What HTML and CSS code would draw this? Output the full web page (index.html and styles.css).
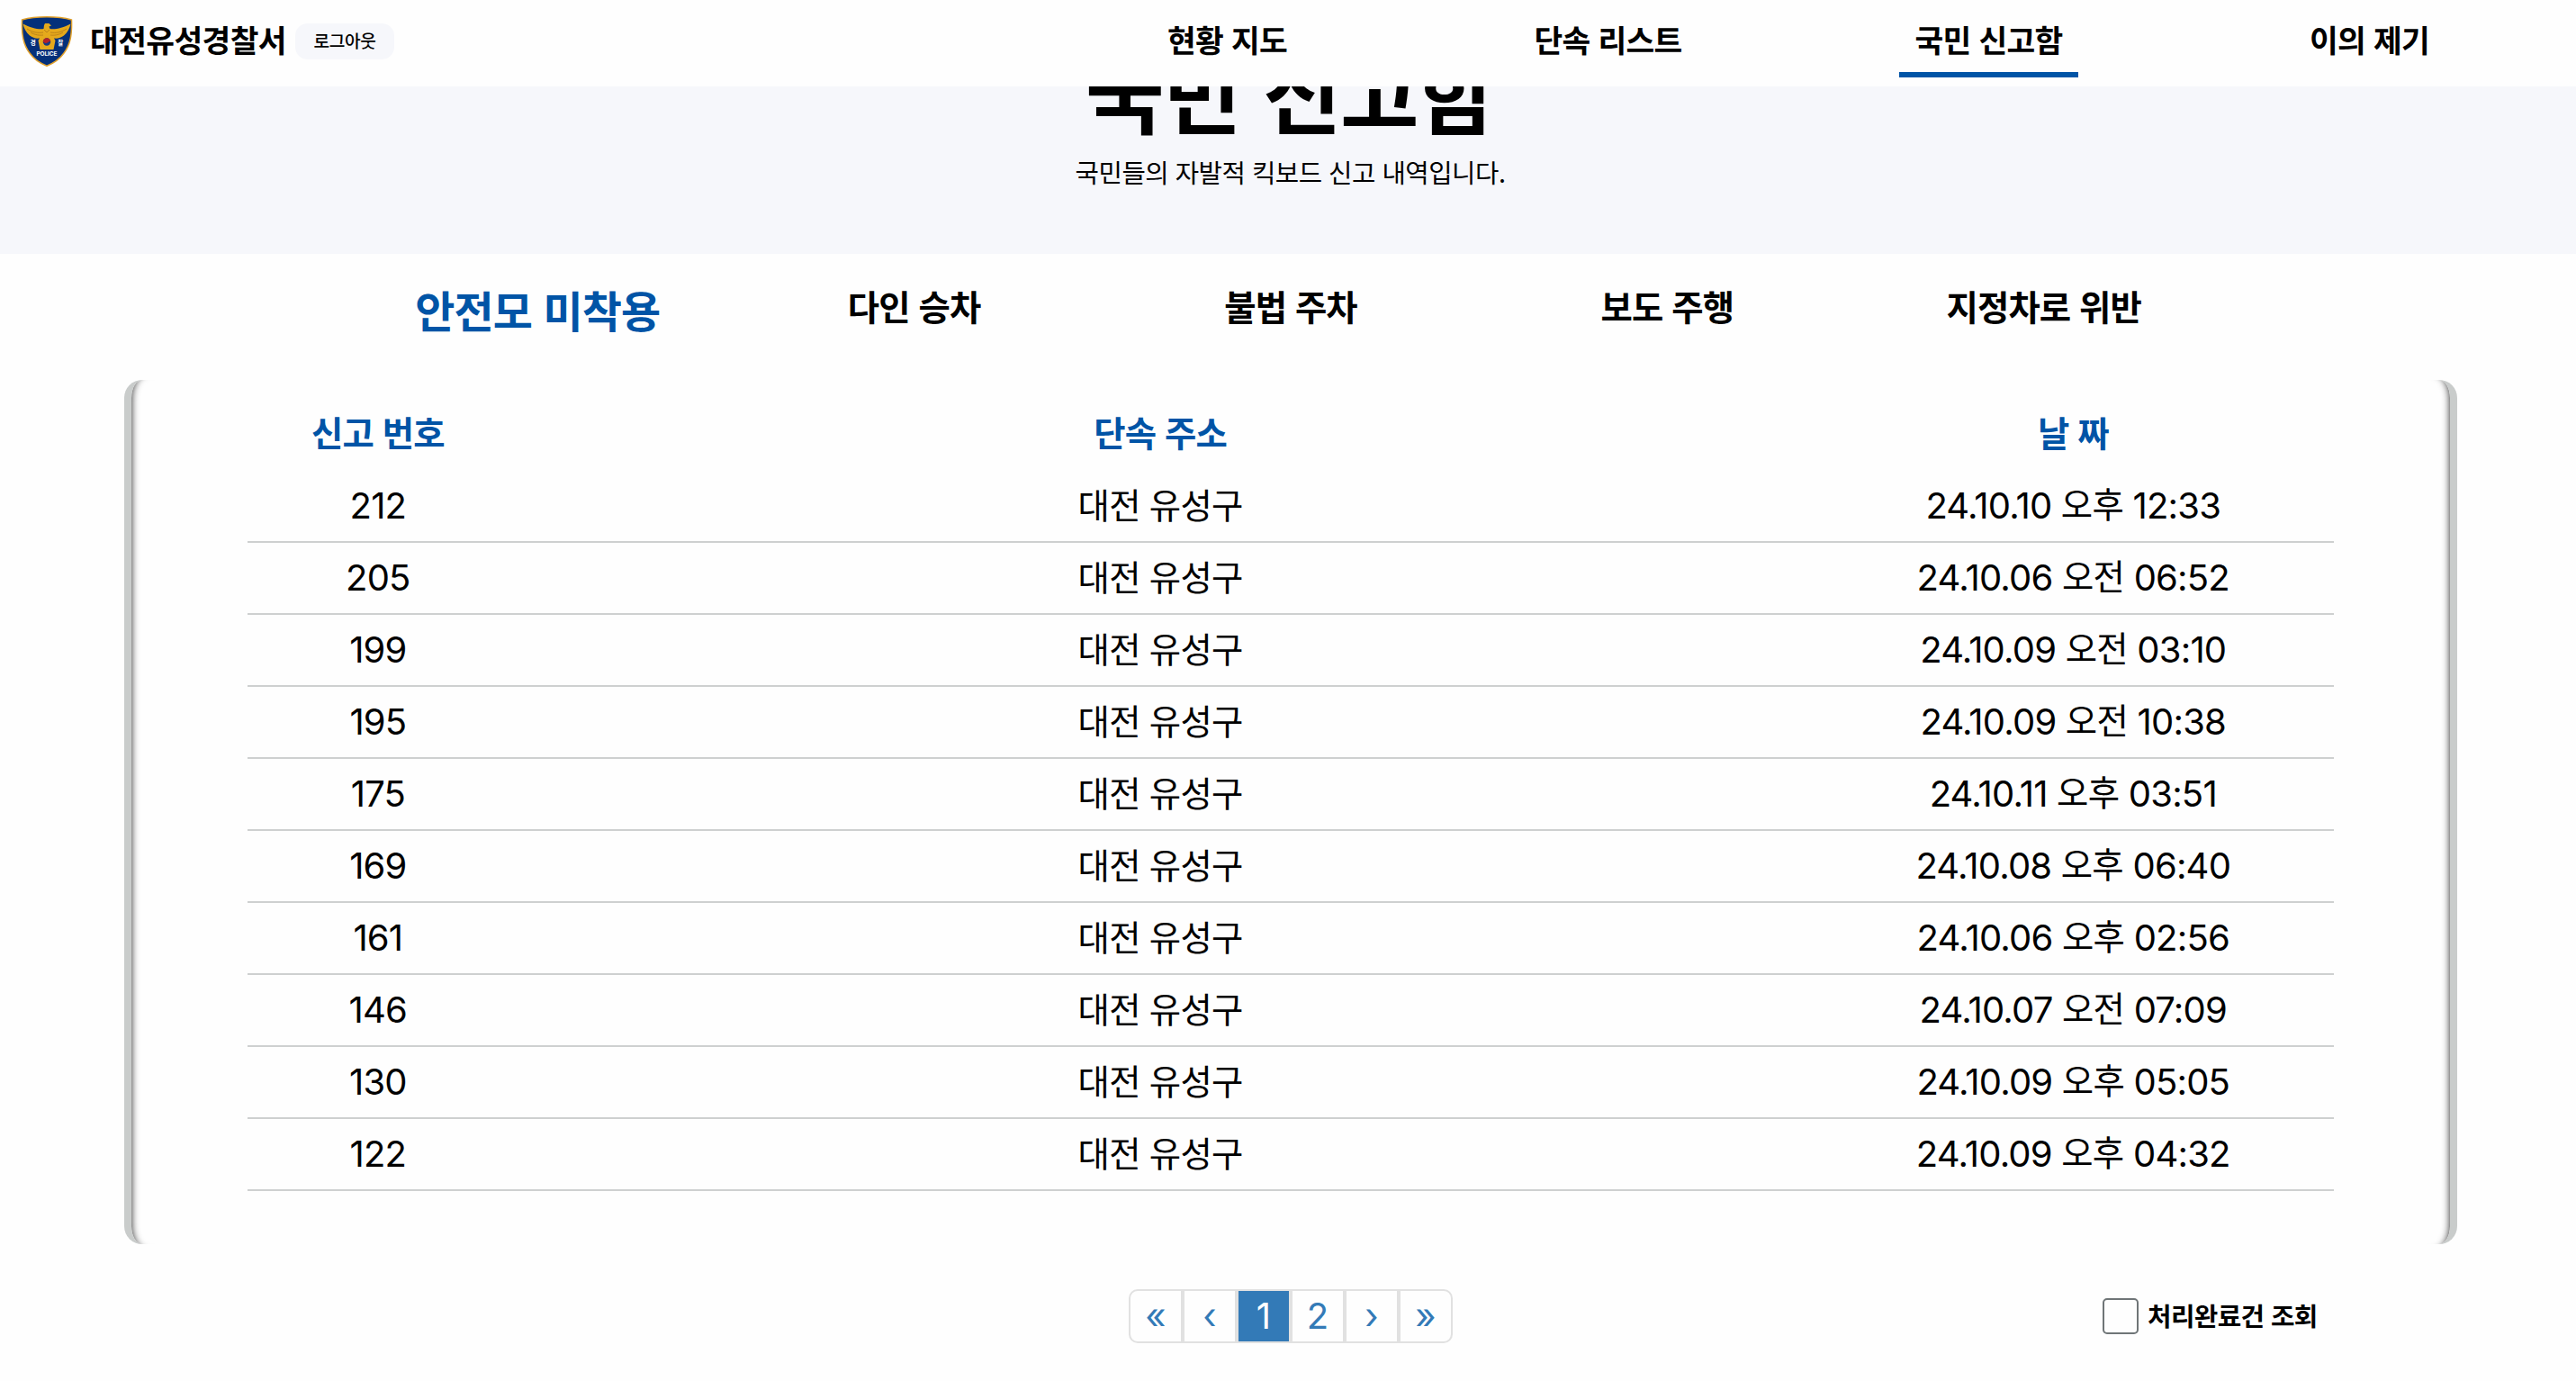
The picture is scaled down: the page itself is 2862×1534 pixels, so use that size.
FILE: index.html
```html
<!DOCTYPE html>
<html lang="ko">
<head>
<meta charset="utf-8">
<title>국민 신고함</title>
<link rel="stylesheet" href="styles.css">
</head>
<body>
<header class="topbar">
  <div class="brand">
    <svg class="logo" viewBox="0 0 58 56" role="img" aria-label="경찰">
      <path d="M1.500 4C10 1.600 19 .8 29 .8S48 1.600 56.500 4C57 20 55.500 31 48 41C43 48 36 52.500 29 55.200C22 52.500 15 48 10 41C2.500 31 1 20 1.500 4Z" fill="#04307a" stroke="#e0a02c" stroke-width="1.500"/>
      <path d="M27 8L31.500 8L34 10.500L31.500 11.500L32.500 14C38 15 47 13 55.500 8.500C54.500 13 52 18 48 21.500C45 24 41 25 37 24.500L38.500 27L36.500 37H21.500L19.500 27L21 24.500C17 25 13 24 10 21.500C6 18 3.500 13 2.500 8.500C11 13 20 15 25.500 14L26 10Z" fill="#e5a91c"/>
      <path d="M7 14C13 18 19 19 25 18M11 18C16 21 21 21.500 25 21M51 14C45 18 39 19 33 18M47 18C42 21 37 21.500 33 21M26 15L29 18L32 15" fill="none" stroke="#a97318" stroke-width=".7"/>
      <circle cx="29" cy="28.500" r="4.200" fill="#173b83"/>
      <path d="M24.800 28.500A4.200 4.200 0 0 1 33.200 28.500C31.500 27 30 30.500 28 30S26 29 24.800 28.500Z" fill="#b32225"/>
      <text x="13.700" y="32" class="logo-hangul">경</text>
      <text x="44.300" y="32" class="logo-hangul">찰</text>
      <text x="29" y="43.500" class="logo-police" textLength="23">POLICE</text>
    </svg>
    <span class="station">대전유성경찰서</span>
    <button class="logout">로그아웃</button>
  </div>
  <nav class="menu">
    <a>현황 지도</a>
    <a>단속 리스트</a>
    <a class="current">국민 신고함</a>
    <a>이의 제기</a>
  </nav>
</header>
<section class="hero">
  <h1>국민 신고함</h1>
  <p>국민들의 자발적 킥보드 신고 내역입니다.</p>
</section>
<nav class="tabs">
  <a class="selected">안전모 미착용</a>
  <a>다인 승차</a>
  <a>불법 주차</a>
  <a>보도 주행</a>
  <a>지정차로 위반</a>
</nav>
<main class="panel">
  <div class="row head"><span>신고 번호</span><span>단속 주소</span><span>날 짜</span></div>
  <div class="row"><span>212</span><span class="ko">대전 유성구</span><span>24.10.10 <b>오후</b> 12:33</span></div>
  <div class="row"><span>205</span><span class="ko">대전 유성구</span><span>24.10.06 <b>오전</b> 06:52</span></div>
  <div class="row"><span>199</span><span class="ko">대전 유성구</span><span>24.10.09 <b>오전</b> 03:10</span></div>
  <div class="row"><span>195</span><span class="ko">대전 유성구</span><span>24.10.09 <b>오전</b> 10:38</span></div>
  <div class="row"><span>175</span><span class="ko">대전 유성구</span><span>24.10.11 <b>오후</b> 03:51</span></div>
  <div class="row"><span>169</span><span class="ko">대전 유성구</span><span>24.10.08 <b>오후</b> 06:40</span></div>
  <div class="row"><span>161</span><span class="ko">대전 유성구</span><span>24.10.06 <b>오후</b> 02:56</span></div>
  <div class="row"><span>146</span><span class="ko">대전 유성구</span><span>24.10.07 <b>오전</b> 07:09</span></div>
  <div class="row"><span>130</span><span class="ko">대전 유성구</span><span>24.10.09 <b>오후</b> 05:05</span></div>
  <div class="row"><span>122</span><span class="ko">대전 유성구</span><span>24.10.09 <b>오후</b> 04:32</span></div>
</main>
<footer class="controls">
  <div class="pages">
    <a>«</a><a>‹</a><a class="active">1</a><a>2</a><a>›</a><a>»</a>
  </div>
  <label class="done"><span class="box"></span><span class="done-text">처리완료건 조회</span></label>
</footer>
</body>
</html>
```
FILE: styles.css
```css
* { box-sizing: border-box; }
body {
  margin: 0;
  height: 1534px;
  overflow: hidden;
  background: #fefefe;
  color: #000;
  font-family: Inter, "Noto Sans CJK KR", sans-serif;
}
.topbar {
  position: relative;
  z-index: 1;
  display: flex;
  justify-content: space-between;
  height: 96px;
  padding-right: 18px;
  background: #fefefe;
}
.brand { display: flex; align-items: center; height: 92px; padding-left: 23px; }
.logo { width: 58px; height: 56px; }
.logo-hangul { font: 700 6.500px "Noto Sans CJK KR", sans-serif; fill: #fff; text-anchor: middle; }
.logo-police { font: 700 6.500px Inter, sans-serif; fill: #fff; text-anchor: middle; }
.station {
  width: 228px;
  margin-left: 19px;
  padding-bottom: 6px;
  font: 600 34.500px/52px "Noto Sans CJK KR", sans-serif;
  letter-spacing: -.6px;
  white-space: nowrap;
}
.logout {
  width: 110px;
  height: 40px;
  padding: 0 0 2px;
  border: 0;
  border-radius: 14px;
  background: #f6f7fb;
  color: #000;
  font: 500 19.200px/38px "Noto Sans CJK KR", sans-serif;
  letter-spacing: -.4px;
}
.menu { display: grid; grid-template-columns: repeat(4, 423px); justify-items: center; }
.menu a {
  height: 86px;
  padding: 17px 18px 0 18px;
  border-bottom: 6px solid transparent;
  font: 600 34.500px/52px "Noto Sans CJK KR", sans-serif;
  letter-spacing: -.75px;
  white-space: nowrap;
}
.menu .current { border-color: #0054a6; }
.hero {
  display: flex;
  flex-direction: column;
  align-items: center;
  height: 186px;
  padding-left: 5px;
  background: #f6f7fb;
}
.hero h1 {
  margin: -55px 0 0;
  font: 700 95.200px/120px "Noto Sans CJK KR", sans-serif;
  letter-spacing: -1.600px;
}
.hero p {
  margin: 10px 0 0;
  font: 400 28.700px/40px "Noto Sans CJK KR", sans-serif;
  letter-spacing: -.5px;
}
.tabs {
  display: grid;
  grid-template-columns: repeat(5, 418.400px);
  justify-content: center;
  height: 140px;
  padding: 27px 0 0 6px;
  text-align: center;
  font: 600 38.400px/60px "Noto Sans CJK KR", sans-serif;
  letter-spacing: -.9px;
}
.selected { color: #0054a6; font-size: 48px; line-height: 68px; }
.panel {
  height: 960px;
  margin: 0 132px 0 138px;
  padding: 19px 129px 0;
  border: solid #c9cccb;
  border-width: 0 8px;
  border-radius: 20px;
  box-shadow: inset 10px 0 9px -10px #222, inset -10px 0 9px -10px #222;
}
.row {
  display: grid;
  grid-template-columns: 12.500% 62.500% 25%;
  height: 80px;
  border-bottom: 2px solid #ced0d0;
  text-align: center;
  font-size: 40px;
  line-height: 78px;
  letter-spacing: -.8px;
}
.row.head {
  height: 82px;
  border: 0;
  color: #0054a6;
  font: 600 38.400px/76px "Noto Sans CJK KR", sans-serif;
  letter-spacing: -.9px;
}
.row .ko, .row b {
  font-family: "Noto Sans CJK KR", sans-serif;
  font-size: 38.400px;
  font-weight: 400;
  letter-spacing: -.7px;
}
.row .ko { line-height: 72px; }
.row b { line-height: 1; vertical-align: 1px; }
.controls {
  display: grid;
  grid-template-columns: 1fr 360px 1fr;
  align-items: center;
  height: 60px;
  margin: 50px 0 0 6px;
}
.pages { grid-column: 2; display: flex; height: 60px; }
.pages a {
  width: 60px;
  border: 2px solid #e1e1e1;
  color: #337ab7;
  font-size: 40px;
  line-height: 56px;
  text-align: center;
}
.pages a:first-child { border-radius: 10px 0 0 10px; }
.pages a:last-child { border-radius: 0 10px 10px 0; }
.pages .active { background: #337ab7; color: #fff; }
.done { display: flex; align-items: center; padding-left: 722px; }
.box { width: 40px; height: 40px; border: 2px solid #6f7577; border-radius: 5px; }
.done-text {
  margin-left: 10px;
  padding-bottom: 3px;
  font: 600 28.800px/40px "Noto Sans CJK KR", sans-serif;
  letter-spacing: -.6px;
  white-space: nowrap;
}
```
